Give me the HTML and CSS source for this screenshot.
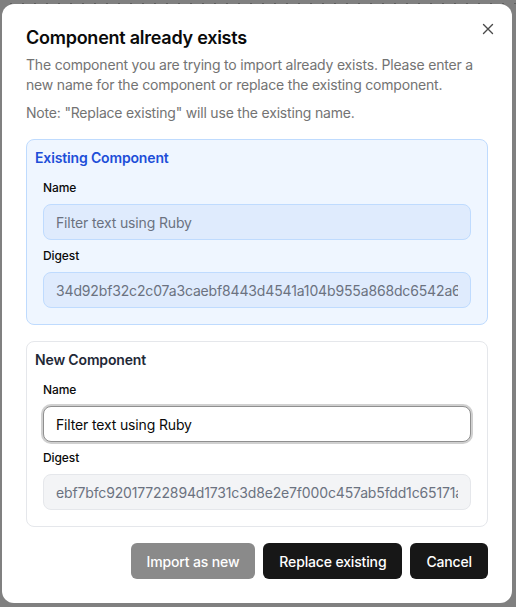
FILE: index.html
```html
<!DOCTYPE html>
<html lang="en">
<head>
<meta charset="utf-8">
<title>Component already exists</title>
<link rel="stylesheet" href="styles.css">
</head>
<body>
<div class="dots"></div>
<div class="dialog" role="dialog">
  <button class="close" aria-label="Close">
    <svg width="16" height="16" viewBox="0 0 16 16" fill="none" stroke="currentColor" stroke-width="1.4" stroke-linecap="round"><path d="M3.5 3.5l9 9M12.5 3.5l-9 9"/></svg>
  </button>
  <h2 class="title">Component already exists</h2>
  <p class="desc">The component you are trying to import already exists. Please enter a new name for the component or replace the existing component.</p>
  <p class="desc note">Note: "Replace existing" will use the existing name.</p>

  <section class="box box-existing">
    <h3 class="box-title">Existing Component</h3>
    <div class="fields">
      <div class="field">
        <label class="label">Name</label>
        <input class="input" type="text" value="Filter text using Ruby" readonly>
      </div>
      <div class="field">
        <label class="label">Digest</label>
        <input class="input" type="text" value="34d92bf32c2c07a3caebf8443d4541a104b955a868dc6542a6f1c0e9d3b7a28e" readonly>
      </div>
    </div>
  </section>

  <section class="box box-new">
    <h3 class="box-title">New Component</h3>
    <div class="fields">
      <div class="field">
        <label class="label">Name</label>
        <input class="input input-focus" type="text" value="Filter text using Ruby">
      </div>
      <div class="field">
        <label class="label">Digest</label>
        <input class="input input-disabled" type="text" value="ebf7bfc92017722894d1731c3d8e2e7f000c457ab5fdd1c65171a9e04b3c2d8f" readonly>
      </div>
    </div>
  </section>

  <div class="actions">
    <button class="btn btn-disabled">Import as new</button>
    <button class="btn">Replace existing</button>
    <button class="btn">Cancel</button>
  </div>
</div>
</body>
</html>
```

FILE: styles.css
```css
* { box-sizing: border-box; }

html, body {
  margin: 0;
  height: 607px;
  overflow: hidden;
}

body {
  background: #808080;
  font-family: Inter, "Noto Sans", sans-serif;
  color: #0a0a0a;
}

.dots {
  height: 1px;
  margin-top: 3px;
  background: repeating-linear-gradient(90deg, transparent 0 10px, #5e5e5e 10px 12px);
}

.dialog {
  position: relative;
  margin-left: 2px;
  width: 510px;
  height: 599px;
  background: #fff;
  border-radius: 12px;
  padding: 20px 24px 24px;
  display: flex;
  flex-direction: column;
}

.close {
  position: absolute;
  top: 17px;
  right: 16px;
  width: 16px;
  height: 16px;
  padding: 0;
  border: 0;
  background: none;
  color: #4a4a4a;
  display: flex;
}

.title {
  margin: 0;
  font-size: 18px;
  line-height: 28px;
  font-weight: 600;
  color: #0a0a0a;
  letter-spacing: -0.25px;
}

.desc {
  margin: 3px 0 0;
  font-size: 14px;
  line-height: 20px;
  color: #737373;
  letter-spacing: -0.19px;
}

.note {
  margin-top: 8px;
}

.box {
  margin-top: 16px;
  border: 1px solid #e5e7eb;
  border-radius: 8px;
  padding: 8px;
}

.box-existing {
  background: #eff6ff;
  border-color: #bfdbfe;
}

.box-title {
  margin: 0;
  font-size: 14px;
  line-height: 20px;
  font-weight: 600;
  color: #1f2937;
  letter-spacing: -0.15px;
}

.box-existing .box-title {
  color: #1d4ed8;
}

.fields {
  margin-top: 12px;
  padding: 0 8px 8px;
  display: flex;
  flex-direction: column;
  gap: 8px;
}

.field {
  display: flex;
  flex-direction: column;
  gap: 8px;
}

.label {
  font-size: 12px;
  line-height: 16px;
  font-weight: 500;
  color: #0a0a0a;
  letter-spacing: -0.1px;
}

.input {
  display: block;
  width: 100%;
  height: 36px;
  border: 1px solid #e5e7eb;
  border-radius: 8px;
  padding: 0 12px;
  font-family: Inter, "Noto Sans", sans-serif;
  font-size: 14px;
  letter-spacing: -0.15px;
  color: #0a0a0a;
  background: #fff;
  outline: none;
}

.box-existing .input {
  background: #dfebfd;
  border-color: #bfdbfe;
  color: #6b7280;
}

.input-focus {
  border-color: #8f8f8f;
  box-shadow: 0 0 0 2px #d0d0d0;
}

.input-disabled {
  background: #f3f4f6;
  color: #6b7280;
}

.actions {
  margin-top: 16px;
  display: flex;
  justify-content: flex-end;
  gap: 8px;
}

.btn {
  height: 36px;
  padding: 0 16px;
  border: 0;
  border-radius: 6px;
  background: #171717;
  color: #fff;
  font-family: Inter, "Noto Sans", sans-serif;
  font-size: 14px;
  font-weight: 500;
  letter-spacing: -0.15px;
}

.btn-disabled {
  opacity: 0.5;
}
```
